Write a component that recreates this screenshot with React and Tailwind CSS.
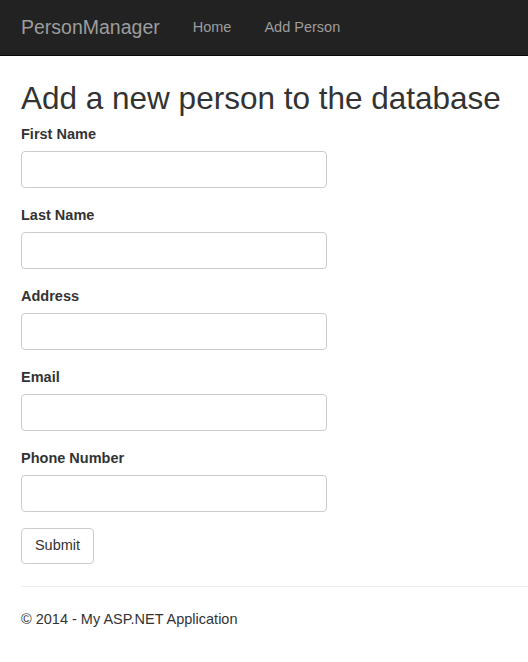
export default function App() {
  const fields = ["First Name", "Last Name", "Address", "Email", "Phone Number"];
  return (
    <div className="min-h-[662px] bg-white text-[#333] text-[14px] overflow-hidden" style={{ fontFamily: '"Liberation Sans", Arial, sans-serif' }}>
      <nav className="h-[56px] bg-[#222] border-b border-[#080808] flex items-center px-[21px]">
        <span className="text-[#9d9d9d] text-[19.5px] leading-none">PersonManager</span>
        <span className="text-[#9d9d9d] text-[14.5px] ml-[33px]">Home</span>
        <span className="text-[#9d9d9d] text-[14.5px] ml-[33px]">Add Person</span>
      </nav>
      <div className="pl-[21px]">
        <h2 className="text-[31.5px] leading-[1.1] mt-[25px] mb-[8px] font-normal whitespace-nowrap">Add a new person to the database</h2>
        <div className="flex flex-col">
          {fields.map((f) => (
            <div key={f} className="flex flex-col mb-[17px] last:mb-[16px]">
              <label className="font-bold text-[14.5px] leading-[20px] mb-[7px]">{f}</label>
              <input className="w-[306px] h-[37px] border border-[#ccc] rounded-[4px] px-3" />
            </div>
          ))}
        </div>
        <button className="h-[36px] w-[73px] border border-[#ccc] rounded-[4px] bg-white text-[#333] text-[14.5px]">Submit</button>
        <hr className="mt-[22px] border-t border-[#eee]" />
        <footer className="mt-[22px] text-[14.5px]">© 2014 - My ASP.NET Application</footer>
      </div>
    </div>
  );
}
